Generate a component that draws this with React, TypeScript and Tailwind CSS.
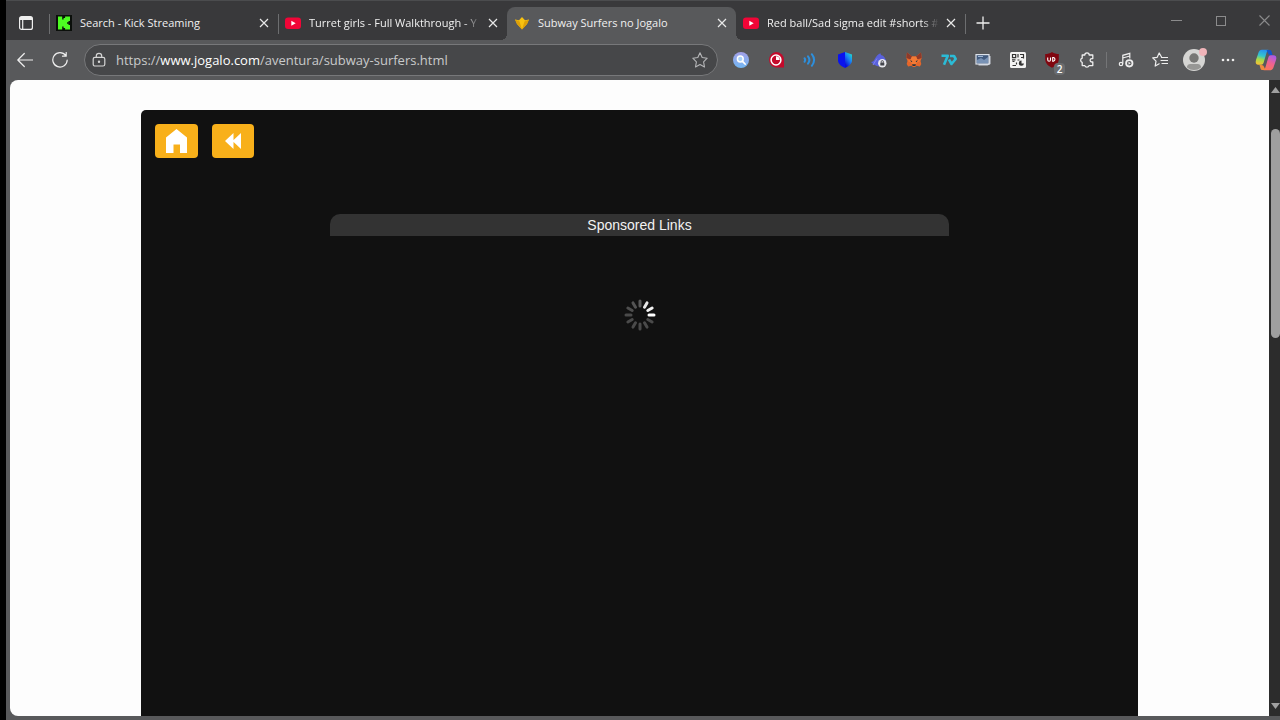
import type { ReactNode } from "react";

type TabInfo = { title: string; icon: ReactNode; active?: boolean };

const KickIcon = () => (
  <svg viewBox="0 0 16 16" className="size-4 shrink-0" aria-hidden="true">
    <rect width="16" height="16" fill="#0b0f0b" />
    <path d="M2 1.500h4.200v3h1.400V3h1.500V1.500H14V6h-1.500v1.200H11v1.600h1.500V10H14v4.500H9.100V13H7.600v-1.500H6.200v3H2z" fill="#4dfc22" />
  </svg>
);

const YouTubeIcon = () => (
  <svg viewBox="0 0 16 16" className="size-4 shrink-0" aria-hidden="true">
    <rect y="2.500" width="16" height="11.500" rx="3" fill="#f10537" />
    <path d="M6.300 5.700v5l4.400-2.500z" fill="#fff" />
  </svg>
);

const JogaloIcon = () => (
  <svg viewBox="0 0 16 16" className="size-4 shrink-0" aria-hidden="true">
    <path d="M1 4.500 5 5.300 8 2l3 3.300 4-.8-2 4.500-5 5.500L3 9z" fill="#f8c20f" />
    <path d="m1 4.500 4.500 2L8 14.500 3 9zM15 4.500l-4.500 2L8 14.500 13 9z" fill="#dda008" />
  </svg>
);

const tabs: TabInfo[] = [
  { title: "Search - Kick Streaming", icon: <KickIcon /> },
  { title: "Turret girls - Full Walkthrough - Y", icon: <YouTubeIcon /> },
  { title: "Subway Surfers no Jogalo", icon: <JogaloIcon />, active: true },
  { title: "Red ball/Sad sigma edit #shorts #", icon: <YouTubeIcon /> },
];

function Tab({ title, icon, active }: TabInfo) {
  return (
    <div
      role="tab"
      aria-selected={!!active}
      className={
        active
          ? "relative flex h-[33px] min-w-0 flex-1 items-center rounded-t-lg bg-[#58595b] pr-[6px] pb-[2px] pl-[7px]"
          : "flex h-[33px] min-w-0 flex-1 items-center pr-[6px] pb-[2px] pl-[7px]"
      }
    >
      {active && (
        <>
          <span className="absolute bottom-0 -left-[6px] size-[6px] bg-[radial-gradient(circle_at_0_0,transparent_6px,#58595b_6px)]" />
          <span className="absolute -right-[6px] bottom-0 size-[6px] bg-[radial-gradient(circle_at_100%_0,transparent_6px,#58595b_6px)]" />
        </>
      )}
      {icon}
      <span
        className={
          title.length > 30
            ? "ml-2 min-w-0 flex-1 overflow-hidden mask-r-from-90% text-[11px] leading-4 font-medium whitespace-nowrap text-[#f0f0f0]"
            : "ml-2 min-w-0 flex-1 text-[11px] leading-4 font-medium whitespace-nowrap text-[#f0f0f0]"
        }
      >
        {title}
      </span>
      <button type="button" aria-label={"Close " + title} className="ml-1 flex size-4 shrink-0 items-center justify-center">
        <svg viewBox="0 0 10 10" className="size-[10px]" fill="none" stroke="#e8e8e8" strokeWidth="1.200" aria-hidden="true">
          <path d="m1 1 8 8M9 1 1 9" />
        </svg>
      </button>
    </div>
  );
}

const Divider = ({ show = true }: { show?: boolean }) => (
  <span className={show ? "-mr-px h-5 w-px shrink-0 bg-[#6d6e70]" : "-mr-px h-5 w-px shrink-0"} />
);

const extensions: { name: string; icon: ReactNode }[] = [
  {
    name: "Image search",
    icon: (
      <svg viewBox="0 0 16 16" className="size-4">
        <defs>
          <linearGradient id="lens" x1="0" y1="0" x2="0" y2="1">
            <stop offset="0" stopColor="#a3a0e8" />
            <stop offset="1" stopColor="#72b7f3" />
          </linearGradient>
        </defs>
        <circle cx="8" cy="8" r="8" fill="url(#lens)" />
        <circle cx="7.300" cy="7" r="2.900" fill="#a9d2f8" stroke="#fff" strokeWidth="1.500" />
        <path d="m9.500 9.300 2.600 2.700" stroke="#fff" strokeWidth="1.800" strokeLinecap="round" />
      </svg>
    ),
  },
  {
    name: "Ad blocker",
    icon: (
      <svg viewBox="0 0 16 16" className="size-4">
        <path d="M8 0a8 8 0 0 1 8 8v7.500H8A7.800 7.800 0 0 1 8 0z" fill="#c40a2b" />
        <circle cx="8" cy="8" r="4.900" fill="none" stroke="#fff" strokeWidth="1.500" />
        <path d="M8 8V4.300A3.700 3.700 0 0 1 11.700 8z" fill="#fff" />
      </svg>
    ),
  },
  {
    name: "Sound booster",
    icon: (
      <svg viewBox="0 0 16 16" className="size-4" fill="none" stroke="#2d8fdc" strokeWidth="2" strokeLinecap="round">
        <path d="M2.500 6.200q1.400 1.800 0 3.600M6 4.400q2.800 3.600 0 7.200M9.800 2.200q4.600 5.800 0 11.600" />
      </svg>
    ),
  },
  {
    name: "Privacy shield",
    icon: (
      <svg viewBox="0 0 16 16" className="size-4">
        <defs>
          <linearGradient id="shield" x1="1" y1="0" x2=".4" y2="1">
            <stop offset="0" stopColor="#20f0c0" />
            <stop offset=".5" stopColor="#1a86f5" />
            <stop offset="1" stopColor="#0a10d8" />
          </linearGradient>
        </defs>
        <path d="M8 0 1 2.500V8c0 4 3 6.200 7 8z" fill="#0a13ee" />
        <path d="m8 0 7 2.500V8c0 4-3 6.200-7 8z" fill="url(#shield)" />
      </svg>
    ),
  },
  {
    name: "VPN",
    icon: (
      <svg viewBox="0 0 16 16" className="size-4">
        <path d="M0 10c2 0 3-1.500 4-3.500S7.500 2 9.500 1.300L10 3c3 .8 4.500 3 5 6l-1.500 4L8 14.500C5 14 2.500 12.500 0 10z" fill="#5961dc" />
        <path d="M6 6.500 2 13" stroke="#7d83ee" />
        <circle cx="11.300" cy="11.300" r="4.200" fill="#e9e9ee" />
        <rect x="9.300" y="10.600" width="4" height="3" rx=".5" fill="#44464d" />
        <path d="M10.200 10.600V9.700a1.100 1.100 0 0 1 2.200 0v.9" fill="none" stroke="#44464d" strokeWidth=".9" />
      </svg>
    ),
  },
  {
    name: "Wallet",
    icon: (
      <svg viewBox="0 0 16 16" className="size-4">
        <path d="M1 .5 6 4.500h4L15 .5l.7 5.500-1.200 3 .8 3-1.400 2.500-3.400-.8L9 15H7l-1.500-1.300-3.400.8L.7 12l.8-3L.3 6z" fill="#e5662a" />
        <path d="M1 .5 6 4.500 4.500 7.500.3 6zM15 .5l-5 4 1.500 3L15.700 6z" fill="#8d3a2b" />
        <path d="m1.500 9 3-1.500L6 4.500h4l1.500 3 3 1.500-3.700 1.500-1 2.800H6.200l-1-2.800z" fill="#f37a35" />
        <path d="m3.800 8.300 2.500.8-.5 1.200zM12.200 8.300l-2.500.8.5 1.200zM6 12.300h4L9.300 14H6.700z" fill="#26343d" />
      </svg>
    ),
  },
  {
    name: "7TV",
    icon: (
      <svg viewBox="0 0 18 16" className="h-4 w-[18px]" fill="none" stroke="#2bbbd6" strokeWidth="2.600" strokeLinejoin="round">
        <path d="M1.500 3.800h6.300L4 12.800" />
        <path d="m9 7.500 2.500 4.500 4.200-5L14 4h-4" />
      </svg>
    ),
  },
  {
    name: "Screenshot",
    icon: (
      <svg viewBox="0 0 16 16" className="size-4">
        <path d="M3.500 4H15.500v8l-3 1.500H3.500z" fill="#c7ced8" />
        <rect x="1" y="2.600" width="13" height="9.400" fill="#415a7e" stroke="#dce2ea" strokeWidth="1.200" />
        <path d="M2 11V8l4-2 3 2 4-3v6z" fill="#7892b5" />
        <path d="M3 4.500h5" stroke="#9fb8d6" />
      </svg>
    ),
  },
  {
    name: "QR code",
    icon: (
      <svg viewBox="0 0 16 16" className="size-4">
        <rect width="16" height="16" rx="1.500" fill="#f3f3f3" />
        <path d="M2.500 2.500h3.200v3.200H2.500zM2.500 9.500h2M2.500 13.500h3.500M8 2v3.500M10 2.500h4M11 5.500h2M13.500 2.500v4M2 7.800h3.500M7.500 8h2M6.500 10.500v2" fill="none" stroke="#333" strokeWidth="1.200" />
        <path d="M11.500 8.500v3H14a2.600 2.600 0 1 1-2.500-3z" fill="#333" />
      </svg>
    ),
  },
];

const ExtensionButton = ({ name, children }: { name: string; children: ReactNode }) => (
  <button type="button" aria-label={name} className="flex items-center justify-center">
    {children}
  </button>
);

function Toolbar() {
  return (
    <div className="flex h-10 items-center bg-[#58595b]">
      <button type="button" aria-label="Back" className="flex w-[38px] shrink-0 items-center justify-center">
        <svg viewBox="0 0 16 16" className="size-4" fill="none" stroke="#eee" strokeWidth="1.200" strokeLinecap="round" strokeLinejoin="round">
          <path d="M15.500 8H.8M7.300 1.500.8 8l6.500 6.500" />
        </svg>
      </button>
      <button type="button" aria-label="Refresh" className="mr-2 flex w-8 shrink-0 items-center justify-center">
        <svg viewBox="0 0 16 16" className="size-4" fill="none" stroke="#eee" strokeWidth="1.200" strokeLinecap="round" strokeLinejoin="round">
          <path d="M15.200 8A7.200 7.200 0 1 1 13.800 3.600M14.200.5v3.700h-3.700" />
        </svg>
      </button>
      <div className="flex h-8 min-w-0 flex-1 items-center rounded-full border border-[#77787a] bg-[#464749] pr-[9px] pl-[7px]">
        <svg viewBox="0 0 14 16" className="h-4 w-[14px] shrink-0" fill="none" stroke="#d5d5d5" strokeWidth="1.200" aria-hidden="true">
          <rect x="1.200" y="5.300" width="11.600" height="8.700" rx="1.800" />
          <path d="M4.300 5.300V4a2.700 2.700 0 0 1 5.400 0v1.300" />
          <circle cx="7" cy="9.700" r=".6" fill="#d5d5d5" />
        </svg>
        <div className="ml-[10px] flex-1 truncate text-[13px] leading-5 text-[#c9cacb]">
          https://<span className="text-white">www.jogalo.com</span>/aventura/subway-surfers.html
        </div>
        <button type="button" aria-label="Add to favorites">
          <svg viewBox="0 0 16 16" className="size-4" fill="none" stroke="#b5b6b8" strokeWidth="1.100" strokeLinejoin="round">
            <path d="m8 .8 2.200 4.700 5 .7-3.600 3.600.9 5.200L8 12.500 3.500 15l.9-5.200L.8 6.200l5-.7z" />
          </svg>
        </button>
      </div>
      <div className="ml-[6px] grid h-full w-[380px] shrink-0 grid-cols-11">
        {extensions.map((e) => (
          <ExtensionButton key={e.name} name={e.name}>
            {e.icon}
          </ExtensionButton>
        ))}
        <button type="button" aria-label="uBlock, 2 blocked" className="relative flex items-center justify-center">
          <svg viewBox="0 0 16 16" className="size-4">
            <path d="M8 0c2 1.500 4.500 2 6.800 2v5c0 4.500-3.300 7-6.800 8.800C4.500 14 1.200 11.500 1.200 7V2C3.500 2 6 1.500 8 0z" fill="#800610" />
            <path d="M3.700 5.500v2.300a1.400 1.400 0 0 0 2.800 0V5.500M8.700 5.500v3.700h.8a1.900 1.900 0 0 0 0-3.700z" fill="none" stroke="#fff" strokeWidth="1.100" />
          </svg>
          <span className="absolute right-1 bottom-[5px] rounded-sm bg-[#6a6c6f] px-[3px] text-[10px] leading-3 font-semibold text-white">2</span>
        </button>
        <ExtensionButton name="Extensions">
          <svg viewBox="0 0 16 16" className="size-4" fill="none" stroke="#eee" strokeWidth="1.300" strokeLinejoin="round">
            <path d="M3.200 3h2.600a2.200 2.200 0 0 1 4.400 0h3.600v3.600h-1a1.700 1.700 0 0 0 0 3.400h1v3.600H10a2.200 2.200 0 0 1-4.200 0H3.200v-3.200a2.200 2.200 0 0 1 0-4.200z" />
          </svg>
        </ExtensionButton>
      </div>
      <span className="mx-[2px] h-4 w-px bg-[#747577]" />
      <div className="flex h-full w-[171px] shrink-0">
        <button type="button" aria-label="Media control" className="flex w-[34px] items-center justify-center">
          <svg viewBox="0 0 16 16" className="size-4" fill="none" stroke="#eee" strokeWidth="1.200">
            <path d="M4.800 11.800V3.300l7-2v5.200M4.800 6l7-2" />
            <circle cx="3" cy="12" r="1.700" />
            <circle cx="11.300" cy="11.300" r="3.200" fill="#58595b" strokeWidth="1.800" />
            <path d="M10.500 9.800v3l2.300-1.500z" fill="#eee" stroke="none" />
          </svg>
        </button>
        <button type="button" aria-label="Favorites" className="flex w-[34px] items-center justify-center">
          <svg viewBox="0 0 16 16" className="size-4" fill="none" stroke="#eee" strokeWidth="1.200" strokeLinecap="round" strokeLinejoin="round">
            <path d="M9.500 5 7.200 1 5.200 5.300l-4.500.6L4 9.200l-.8 4.900 4-2.300M9.500 5.500h6M9 8.500h6.500M10 11.500h5.500" />
          </svg>
        </button>
        <button type="button" aria-label="Profile" className="relative flex w-[34px] items-center justify-center">
          <svg viewBox="0 0 22 22" className="size-[22px]">
            <circle cx="11" cy="11" r="11" fill="#d5d5d3" />
            <circle cx="11" cy="9" r="4.700" fill="#777775" />
            <path d="M4 18.500v-1A3 3 0 0 1 7 15h8a3 3 0 0 1 3 2.500v1A10.500 10.500 0 0 1 11 21a10.500 10.500 0 0 1-7-2.500z" fill="#979795" />
          </svg>
          <span className="absolute top-2 right-1 size-2 rounded-full bg-[#efb4b9]" />
        </button>
        <button type="button" aria-label="Settings and more" className="flex w-[34px] items-center justify-center">
          <svg viewBox="0 0 14 4" className="h-1 w-[14px]" fill="#eee">
            <circle cx="2" cy="2" r="1.300" />
            <circle cx="7" cy="2" r="1.300" />
            <circle cx="12" cy="2" r="1.300" />
          </svg>
        </button>
        <button type="button" aria-label="Copilot" className="flex flex-1 items-center justify-end pr-[3px]">
          <svg viewBox="0 0 22 22" className="size-[22px]">
            <defs>
              <linearGradient id="copilotLeft" x1=".5" y1="0" x2=".3" y2="1">
                <stop offset="0" stopColor="#2793ee" />
                <stop offset=".4" stopColor="#35c6cc" />
                <stop offset=".65" stopColor="#a5d94a" />
                <stop offset="1" stopColor="#f6c234" />
              </linearGradient>
              <linearGradient id="copilotRight" x1=".7" y1="0" x2=".3" y2="1">
                <stop offset="0" stopColor="#a85bea" />
                <stop offset=".5" stopColor="#ef6291" />
                <stop offset="1" stopColor="#fa7659" />
              </linearGradient>
            </defs>
            <path d="M13.500.8H7C4.800.8 4 2 3.200 4.500L1 11c-.9 3 0 4.700 2.500 4.700h2.700c1.300 0 2-.8 2.400-2L11.500 4c.5-1.700 1.300-2.700 2-3.200z" fill="url(#copilotLeft)" />
            <path d="M8.500 21.200H15c2.200 0 3-1.200 3.800-3.700L21 11c.9-3 0-4.700-2.500-4.700h-2.700c-1.300 0-2 .8-2.400 2L10.500 18c-.5 1.700-1.300 2.700-2 3.200z" fill="url(#copilotRight)" />
            <path d="M11.500 1h3.200c1 0 1.500.6 1.800 1.500l1 3.500h-2c-1.400 0-2.200-.8-2.600-2z" fill="#1455c9" />
            <path d="M10.500 21H7.300c-1 0-1.500-.6-1.800-1.500l-1-3.500h2c1.400 0 2.200.8 2.600 2z" fill="#f08a3c" />
          </svg>
        </button>
      </div>
    </div>
  );
}

const spokes = [
  "#5a5a5a", "#e6e6e6", "#f2f2f2", "#ffffff", "#4a4a4a", "#4a4a4a",
  "#4a4a4a", "#4a4a4a", "#4a4a4a", "#4a4a4a", "#4e4e4e", "#545454",
];

const Spinner = () => (
  <svg viewBox="0 0 32 32" className="size-8" role="img" aria-label="Loading">
    {spokes.map((color, i) => (
      <rect key={i} x="14.500" y="0.500" width="3" height="8" rx="1.500" fill={color} transform={`rotate(${i * 30} 16 16)`} />
    ))}
  </svg>
);

function GamePage() {
  return (
    <main className="flex flex-1 flex-col bg-[#fdfdfd] pt-[30px]">
      <section className="mx-auto flex w-full max-w-[997px] flex-1 flex-col items-center rounded-t-[5px] bg-[#111111]">
        <nav className="flex w-full gap-[14px] p-[14px]">
          <a href="#home" aria-label="Home" className="flex h-[34px] w-[43px] items-center justify-center rounded bg-[#f8b01a]">
            <svg viewBox="0 0 24 26" className="h-[26px] w-6" fill="#fff">
              <path d="M11.500 1 22 9.500V25h-7v-8.500H8.500V25H1V9.500z" />
            </svg>
          </a>
          <a href="#back" aria-label="Back" className="flex h-[34px] w-[42px] items-center justify-center rounded bg-[#f8b01a]">
            <svg viewBox="0 0 16 16" className="size-4" fill="#fff">
              <path d="M8.500 0v16L0 8zM16 0v16L7.500 8z" />
            </svg>
          </a>
        </nav>
        <h2 className="mt-[42px] w-full max-w-[619px] rounded-t-[10px] bg-[#333333] text-center font-['Liberation_Sans',Arial,sans-serif] text-sm leading-[22px] text-[#f2f2f2]">
          Sponsored Links
        </h2>
        <div className="mt-[63px]">
          <Spinner />
        </div>
      </section>
    </main>
  );
}

const PageScrollbar = () => (
  <div className="flex w-[11px] shrink-0 flex-col items-end bg-[#2c2c2c] pt-[7px] pb-[7px]" aria-hidden="true">
    <svg viewBox="0 0 9 6" className="h-[6px] w-[9px]" fill="#a0a0a0">
      <path d="M4.500 0 9 6H0z" />
    </svg>
    <div className="mt-9 h-[209px] w-[9px] rounded-full bg-[#9f9f9f]" />
    <svg viewBox="0 0 9 6" className="mt-auto h-[6px] w-[9px]" fill="#a0a0a0">
      <path d="M4.500 6 9 0H0z" />
    </svg>
  </div>
);

export default function App() {
  return (
    <div className="flex min-h-screen flex-col overflow-hidden border-l-[6px] border-black bg-[#58595b] font-['Open_Sans','Noto_Sans',sans-serif]">
      <header>
        <div className="flex h-10 items-end border-t border-[#4b4c4e] bg-[#39393b]">
          <button type="button" aria-label="Tab actions" className="flex h-[33px] w-[43px] shrink-0 items-center pb-[2px] pl-[13px]">
            <svg viewBox="0 0 14 14" className="size-[14px]" fill="none" stroke="#eee" strokeWidth="1.200">
              <rect x=".6" y=".6" width="12.800" height="12.800" rx="2" />
              <path d="M1 2.500h12" strokeWidth="3" />
              <path d="M3.700 3v10.500" />
            </svg>
          </button>
          <div role="tablist" aria-label="Open tabs" className="flex min-w-0 flex-1 items-center">
            {tabs.map((tab, i) => (
              <div key={tab.title} className="flex max-w-[229px] min-w-0 flex-1 items-center">
                <Divider show={i < 2} />
                <Tab {...tab} />
              </div>
            ))}
            <Divider />
            <button type="button" aria-label="New tab" className="flex h-[33px] w-9 shrink-0 items-center justify-center pb-[2px]">
              <svg viewBox="0 0 14 14" className="size-[14px]" fill="none" stroke="#eee" strokeWidth="1.300">
                <path d="M7 .5v13M.5 7h13" />
              </svg>
            </button>
          </div>
          <div className="flex h-full w-[109px] shrink-0 items-center justify-between pr-[10px]">
            <button type="button" aria-label="Minimize" className="flex size-[11px] items-center">
              <span className="h-px w-full bg-[#8b8b8c]" />
            </button>
            <button type="button" aria-label="Maximize" className="size-[10px] border border-[#8b8b8c]" />
            <button type="button" aria-label="Close window">
              <svg viewBox="0 0 11 11" className="size-[11px]" fill="none" stroke="#8b8b8c" strokeWidth="1.100">
                <path d="m.5.5 10 10M10.500.5l-10 10" />
              </svg>
            </button>
          </div>
        </div>
        <Toolbar />
      </header>
      <div className="mb-1 ml-1 flex flex-1 overflow-hidden rounded-l-lg">
        <GamePage />
        <PageScrollbar />
      </div>
    </div>
  );
}
